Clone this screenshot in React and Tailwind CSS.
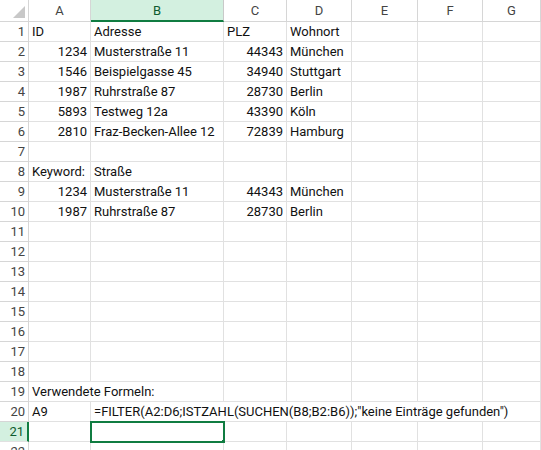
const cols = [
  { k: "A", w: 62 },
  { k: "B", w: 133 },
  { k: "C", w: 63 },
  { k: "D", w: 65 },
  { k: "E", w: 66 },
  { k: "F", w: 65 },
  { k: "G", w: 58 },
];

const data = {
  1: [["ID"], ["Adresse"], ["PLZ"], ["Wohnort"]],
  2: [["1234", 1], ["Musterstraße 11"], ["44343", 1], ["München"]],
  3: [["1546", 1], ["Beispielgasse 45"], ["34940", 1], ["Stuttgart"]],
  4: [["1987", 1], ["Ruhrstraße 87"], ["28730", 1], ["Berlin"]],
  5: [["5893", 1], ["Testweg 12a"], ["43390", 1], ["Köln"]],
  6: [["2810", 1], ["Fraz-Becken-Allee 12"], ["72839", 1], ["Hamburg"]],
  8: [["Keyword:"], ["Straße"]],
  9: [["1234", 1], ["Musterstraße 11"], ["44343", 1], ["München"]],
  10: [["1987", 1], ["Ruhrstraße 87"], ["28730", 1], ["Berlin"]],
};

function Cell({ w, children, right, sel }) {
  return (
    <div
      className={
        "h-5 shrink-0 px-[3px] text-[13px] leading-5 whitespace-nowrap overflow-hidden text-[#111] border-r border-b border-[#e1e1e1] " +
        (right ? "text-right " : "") +
        (sel ? "outline-2 outline-[#107c41] -outline-offset-1 relative " : "")
      }
      style={{ width: w }}
    >
      {children}
      {sel ? <span className="absolute -right-[3px] -bottom-[3px] w-[5px] h-[5px] bg-[#107c41] border border-white" /> : null}
    </div>
  );
}

function RowHead({ n, sel }) {
  return (
    <div
      className={
        "h-5 w-[29px] shrink-0 text-right pr-[3px] text-[13px] leading-5 border-r border-b " +
        (sel
          ? "bg-[#d3f0e0] text-[#0e5c2f] border-[#e1e1e1] border-r-2 border-r-[#107c41]"
          : "text-[#444] border-[#d6d6d6]")
      }
    >
      {n}
    </div>
  );
}

export default function App() {
  const rows = Array.from({ length: 22 }, (_, i) => i + 1);
  return (
    <div className="w-[541px] h-[450px] overflow-hidden bg-white" style={{ fontFamily: "Roboto, 'Noto Sans', sans-serif" }}>
      <div className="flex h-[22px]">
        <div className="w-[29px] shrink-0 border-r border-b border-[#d6d6d6] relative">
          <div className="absolute right-[3px] bottom-[3px] w-0 h-0 border-l-[12px] border-l-transparent border-b-[12px] border-b-[#c8c8c8]" />
        </div>
        {cols.map((c) => (
          <div
            key={c.k}
            className={
              "shrink-0 text-center text-[13px] leading-[21px] border-r " +
              (c.k === "B"
                ? "bg-[#d3f0e0] text-[#0e5c2f] border-[#c9c9c9] border-b-2 border-b-[#107c41]"
                : "text-[#444] border-[#d6d6d6] border-b")
            }
            style={{ width: c.w }}
          >
            {c.k}
          </div>
        ))}
      </div>
      {rows.map((r) => (
        <div key={r} className="flex">
          <RowHead n={r} sel={r === 21} />
          {r === 19 ? (
            <>
              <Cell w={195}>Verwendete Formeln:</Cell>
              {cols.slice(2).map((c) => <Cell key={c.k} w={c.w} />)}
            </>
          ) : r === 20 ? (
            <>
              <Cell w={62}>A9</Cell>
              <Cell w={450}>=FILTER(A2:D6;ISTZAHL(SUCHEN(B8;B2:B6));"keine Einträge gefunden")</Cell>
            </>
          ) : (
            cols.map((c, i) => {
              const d = data[r]?.[i];
              return (
                <Cell key={c.k} w={c.w} right={d?.[1]} sel={r === 21 && c.k === "B"}>
                  {d?.[0]}
                </Cell>
              );
            })
          )}
        </div>
      ))}
    </div>
  );
}
